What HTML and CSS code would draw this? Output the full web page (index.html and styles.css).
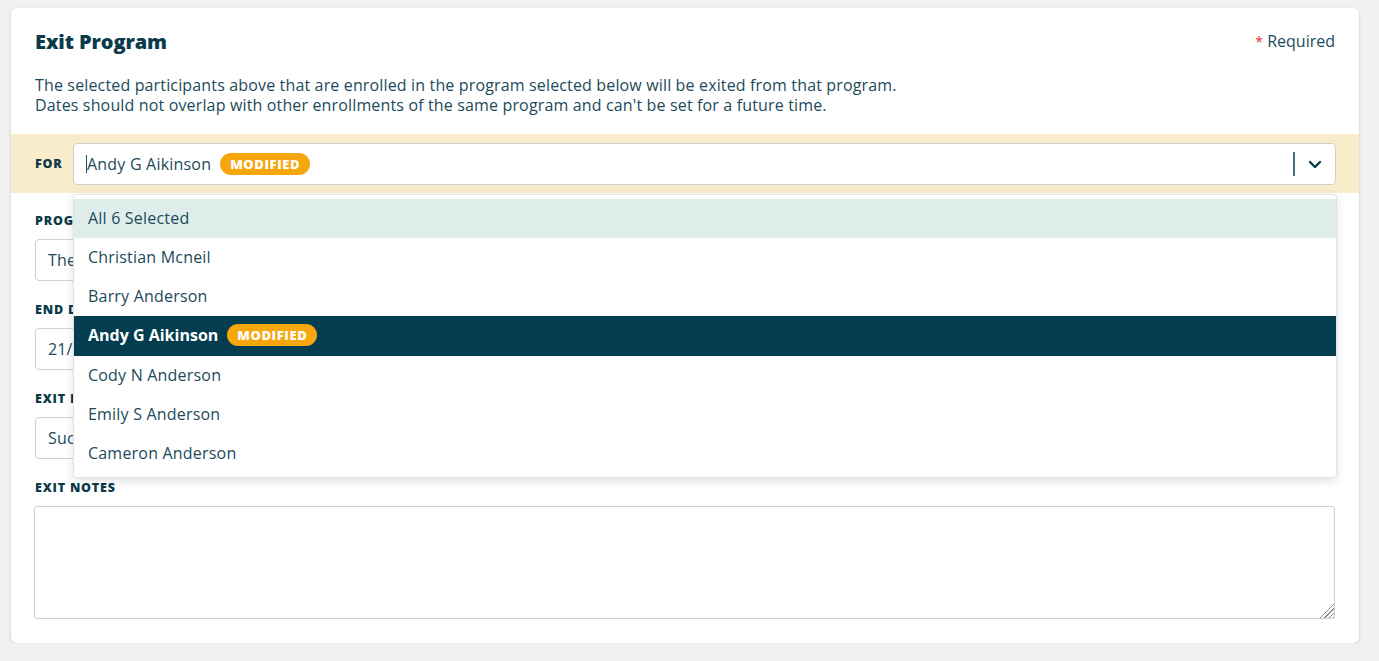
FILE: index.html
```html
<!DOCTYPE html>
<html lang="en">
<head>
  <meta charset="UTF-8" />
  <meta name="viewport" content="width=device-width, initial-scale=1.0" />
  <title>Exit Program</title>
  <link rel="stylesheet" href="styles.css">
</head>
<body>

  <div class="panel">
    <div class="panel-head">
      <div class="title-row">
        <h2>Exit Program</h2>
        <span class="required"><span class="star">*</span> Required</span>
      </div>
      <p class="intro">
        The selected participants above that are enrolled in the program selected below will be exited from that program.<br>
        Dates should not overlap with other enrollments of the same program and can't be set for a future time.
      </p>
    </div>

    <!-- participant picker -->
    <div class="for-bar">
      <span class="label">For</span>
      <div class="picker">
        <div class="picker-control">
          <span class="caret"></span>
          <span class="picker-value">Andy G Aikinson</span>
          <span class="badge">Modified</span>
          <span class="picker-sep"></span>
          <span class="picker-arrow">
            <svg width="14" height="9" viewBox="0 0 14 9"><path d="M2 2l5 5 5-5" fill="none" stroke="#0b3a4a" stroke-width="2.4" stroke-linecap="round" stroke-linejoin="round"/></svg>
          </span>
        </div>

        <ul class="picker-menu">
          <li class="opt all">All 6 Selected</li>
          <li class="opt">Christian Mcneil</li>
          <li class="opt">Barry Anderson</li>
          <li class="opt active">Andy G Aikinson <span class="badge">Modified</span></li>
          <li class="opt">Cody N Anderson</li>
          <li class="opt">Emily S Anderson</li>
          <li class="opt">Cameron Anderson</li>
        </ul>
      </div>
    </div>

    <div class="fields">
      <div class="field">
        <label class="label">Program</label>
        <div class="input">The Hope Program</div>
      </div>
      <div class="field">
        <label class="label">End Date</label>
        <div class="input">21/03/2023</div>
      </div>
      <div class="field">
        <label class="label">Exit Reason</label>
        <div class="input">Successful completion</div>
      </div>
      <div class="field last">
        <label class="label">Exit Notes</label>
        <textarea class="notes"></textarea>
      </div>
    </div>
  </div>

</body>
</html>
```

FILE: styles.css
```css
* {
  margin: 0;
  padding: 0;
  box-sizing: border-box;
}

body {
  background: #f1f1f1;
  font-family: 'Open Sans', 'Liberation Sans', sans-serif;
  color: #1c4a5a;
  letter-spacing: 0.15px;
  padding: 8px 20px 0 11px;
}

.panel {
  background: #fff;
  border-radius: 6px;
  box-shadow: 0 1px 3px rgba(0,0,0,0.18);
  padding-bottom: 24px;
}

.panel-head {
  padding: 21px 24px 19px 24px;
}

.title-row {
  display: flex;
  justify-content: space-between;
  align-items: center;
  height: 24px;
}

.title-row h2 {
  font-size: 20px;
  font-weight: 800;
  color: #0b3a4a;
  line-height: 24px;
  letter-spacing: -0.1px;
  padding-top: 2px;
}

.required {
  font-size: 16px;
  color: #1c4a5a;
  letter-spacing: 0;
}

.required .star {
  color: #e32b2b;
  font-size: 14px;
}

.intro {
  margin-top: 22px;
  font-size: 16px;
  line-height: 20px;
}

.label {
  display: block;
  font-size: 12.5px;
  font-weight: 800;
  line-height: 16px;
  letter-spacing: 0.8px;
  text-transform: uppercase;
  color: #0b3a4a;
}

/* yellow strip holding the participant select */
.for-bar {
  background: #f8ecca;
  display: flex;
  align-items: center;
  gap: 11px;
  padding: 9px 23px 8px 24px;
}

.for-bar .label {
  width: 27px;
}

.picker {
  flex: 1;
  position: relative;
}

.picker-control {
  height: 42px;
  background: #fff;
  border: 1px solid #cfcfcf;
  border-radius: 4px;
  display: flex;
  align-items: center;
  padding-left: 12px;
  font-size: 16px;
}

.caret {
  width: 1px;
  height: 18px;
  background: #1c4a5a;
}

.picker-value {
  margin-right: 9px;
  letter-spacing: 0.2px;
}

.badge {
  display: inline-flex;
  align-items: center;
  height: 22px;
  padding: 0 10px;
  border-radius: 11px;
  background: #f7a60e;
  color: #fff;
  font-size: 13px;
  font-weight: 800;
  letter-spacing: 0.6px;
  text-transform: uppercase;
}

.picker-sep {
  margin-left: auto;
  width: 2px;
  height: 24px;
  background: #4a6c78;
}

.picker-arrow {
  width: 40px;
  display: flex;
  justify-content: center;
}

.picker-menu {
  list-style: none;
  position: absolute;
  top: 51px;
  left: 0;
  right: -1px;
  z-index: 5;
  background: #fff;
  border: 1px solid #e2e2e2;
  border-radius: 4px;
  box-shadow: 0 3px 10px rgba(0,0,0,0.12);
  padding: 4px 0 4px 0;
}

.opt {
  height: 39px;
  display: flex;
  align-items: center;
  padding: 0 0 2px 14px;
  font-size: 16px;
  letter-spacing: 0.2px;
  color: #1c4a5a;
}

.opt.all {
  background: #dfeeeb;
}

.opt.active {
  background: #033d4f;
  color: #fff;
  font-weight: 700;
  letter-spacing: 0;
  height: 40px;
}

.opt.active .badge {
  margin-left: 9px;
  letter-spacing: 0.6px;
}

.fields {
  padding: 20px 24px 0 23px;
}

.field {
  margin-bottom: 21px;
}

.field .label {
  margin-bottom: 10px;
  padding-left: 1px;
}

.field.last {
  margin-bottom: 0;
}

.input {
  height: 42px;
  border: 1px solid #cfcfcf;
  border-radius: 4px;
  padding-left: 12px;
  display: flex;
  align-items: center;
  font-size: 16px;
  margin-left: 1px;
}

.notes {
  display: block;
  width: 100%;
  height: 113px;
  border: 1px solid #cfcfcf;
  border-radius: 3px;
  font-family: inherit;
  resize: vertical;
}

/* striped grip in the corner */
.notes::-webkit-resizer {
  background:
    linear-gradient(135deg, #fff 50%, transparent 50%),
    repeating-linear-gradient(135deg, transparent 0 2px, #8a8a8a 2px 3px);
}
```
